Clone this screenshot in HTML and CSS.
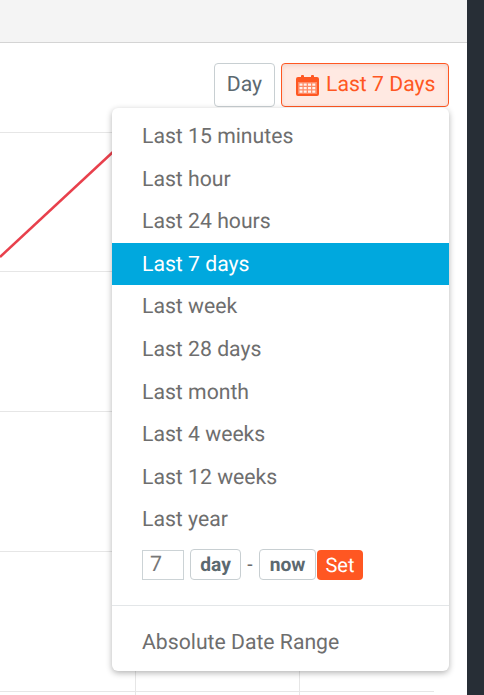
FILE: index.html
```html
<!DOCTYPE html>
<html lang="en">
<head>
<meta charset="utf-8">
<title>Date range</title>
<link rel="stylesheet" href="styles.css">
</head>
<body>
<div class="app">
  <main class="main">
    <header class="topbar"></header>
    <section class="panel">
      <div class="toolbar">
        <button class="btn">Day</button>
        <button class="btn btn-active">
          <svg class="cal" viewBox="0 0 23 21" aria-hidden="true">
            <path fill="currentColor" d="M2 2h3V1a1 1 0 0 1 1-1h1a1 1 0 0 1 1 1v1h7V1a1 1 0 0 1 1-1h1a1 1 0 0 1 1 1v1h3a2 2 0 0 1 2 2v15a2 2 0 0 1-2 2H2a2 2 0 0 1-2-2V4a2 2 0 0 1 2-2z"/>
            <path fill="#ffd9cc" d="M2 7h19v12H2z"/>
            <path fill="currentColor" opacity=".6" d="M2 7h19v12H2z"/>
            <path fill="#fff3ee" d="M3.500 8.500h3v2.300h-3zM7.700 8.500h3v2.300h-3zM12 8.500h3v2.300h-3zM16.300 8.500h3v2.300h-3zM3.500 12h3v2.300h-3zM7.700 12h3v2.300h-3zM12 12h3v2.300h-3zM16.300 12h3v2.300h-3zM3.500 15.500h3v2.300h-3zM7.700 15.500h3v2.300h-3zM12 15.500h3v2.300h-3zM16.300 15.500h3v2.300h-3z"/>
          </svg>
          Last 7 Days
        </button>
      </div>
      <svg class="chart" viewBox="0 0 467 695" aria-hidden="true">
        <g class="grid">
          <line x1="0" y1="132.500" x2="434" y2="132.500"/>
          <line x1="0" y1="271.500" x2="434" y2="271.500"/>
          <line x1="0" y1="411.500" x2="434" y2="411.500"/>
          <line x1="0" y1="551.500" x2="434" y2="551.500"/>
          <line x1="0" y1="691.500" x2="434" y2="691.500"/>
          <line x1="135.500" y1="132" x2="135.500" y2="695"/>
          <line x1="299.500" y1="132" x2="299.500" y2="695"/>
        </g>
        <line class="series" x1="0" y1="257" x2="114" y2="151"/>
      </svg>
      <div class="menu">
        <ul class="ranges">
          <li>Last 15 minutes</li>
          <li>Last hour</li>
          <li>Last 24 hours</li>
          <li class="selected">Last 7 days</li>
          <li>Last week</li>
          <li>Last 28 days</li>
          <li>Last month</li>
          <li>Last 4 weeks</li>
          <li>Last 12 weeks</li>
          <li>Last year</li>
        </ul>
        <div class="custom">
          <input class="num" type="text" value="7">
          <button class="chip chip-day">day</button>
          <span class="dash">-</span>
          <button class="chip chip-now">now</button>
          <button class="set">Set</button>
        </div>
        <div class="absolute">Absolute Date Range</div>
      </div>
    </section>
  </main>
  <aside class="rail"></aside>
</div>
</body>
</html>
```
FILE: styles.css
```css
* { box-sizing: border-box; }
html, body { margin: 0; height: 100%; overflow: hidden; background: #fff; }
body { font-family: Roboto, "Liberation Sans", sans-serif; color: #666; text-rendering: geometricPrecision; }
.app { display: flex; width: 484px; height: 695px; }
.main { flex: 1; min-width: 0; display: flex; flex-direction: column; }
.rail { width: 17px; background: #272e36; }
.topbar { height: 43px; background: #f4f4f4; border-bottom: 1px solid #d4d4d4; flex: none; }
.panel { position: relative; flex: 1; }
.toolbar { display: flex; justify-content: flex-end; gap: 6px; padding: 20px 18px 0 0; position: relative; }
.btn { height: 44px; width: 61px; padding: 0; justify-content: center; font: 21.200px/1 Roboto, sans-serif; text-rendering: geometricPrecision; color: #5c6970; background: #fff; border: 1px solid #c8cfd2; border-radius: 4px; display: flex; align-items: center; }
.btn-active { width: 168px; padding: 0 0 0 14px; justify-content: flex-start; gap: 7px; color: #ff5722; background: #ffe9e2; border-color: #ff5722; white-space: nowrap; box-shadow: inset 0 2px 4px rgba(120,50,20,.1); }
.cal { width: 23px; height: 21px; flex: none; }
.chart { position: absolute; left: 0; top: -43px; width: 467px; height: 695px; }
.grid line { stroke: #e6e6e6; stroke-width: 1; }
.series { stroke: #e8404c; stroke-width: 2.500; }
.menu { position: absolute; left: 112px; top: 65px; width: 337px; height: 563px; padding-top: 7px; background: #fff; border-radius: 6px; box-shadow: 0 2px 6px rgba(0,0,0,.3); font-size: 21.200px; }
.ranges { list-style: none; margin: 0; padding: 0; }
.ranges li { height: 42.600px; line-height: 43.200px; padding-left: 30px; color: #6e6e6e; }
.ranges .selected { background: #00a8de; color: #fff; }
.custom { display: flex; align-items: center; height: 32px; margin-top: 7.800px; padding-left: 30px; }
.num { width: 42px; height: 30px; padding: 0 7px; border: 1px solid #ccd3d6; border-radius: 0; font: 21.330px Roboto, sans-serif; text-rendering: geometricPrecision; color: #777; background: #fff; }
.chip { height: 31px; padding: 0; font: 700 19.200px/1 Roboto, sans-serif; text-rendering: geometricPrecision; color: #5c6970; background: #fff; border: 1px solid #c8cfd2; border-radius: 4px; }
.chip-day { width: 51px; margin-left: 6px; }
.chip-now { width: 57px; }
.dash { width: 18px; text-align: center; font-size: 19.200px; color: #666; }
.set { height: 30px; width: 46px; margin-left: 1px; padding: 0; font: 20px/1 Roboto, sans-serif; text-rendering: geometricPrecision; color: #fff; background: #ff5722; border: 0; border-radius: 4px; }
.absolute { margin-top: 24px; padding: 16px 0 0 30px; border-top: 1px solid #e3e6e8; line-height: 42px; height: 66px; color: #6e6e6e; }
```
